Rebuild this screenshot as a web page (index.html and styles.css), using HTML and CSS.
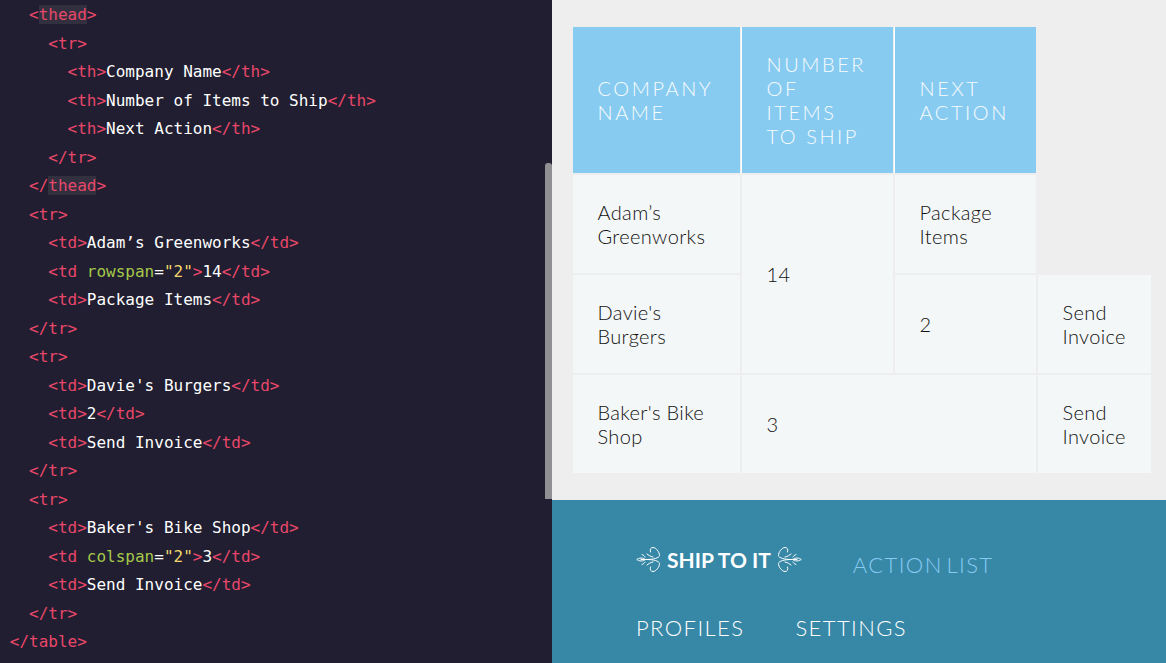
FILE: index.html
```html
<!DOCTYPE html>
<html lang="en">
<head>
<meta charset="utf-8">
<title>Table rowspan and colspan</title>
<link rel="stylesheet" href="styles.css">
</head>
<body>
<main class="layout">
<section class="editor">
<pre class="code">  <span class="t">&lt;<span class="hl">thead</span>&gt;</span>
    <span class="t">&lt;tr&gt;</span>
      <span class="t">&lt;th&gt;</span>Company Name<span class="t">&lt;/th&gt;</span>
      <span class="t">&lt;th&gt;</span>Number of Items to Ship<span class="t">&lt;/th&gt;</span>
      <span class="t">&lt;th&gt;</span>Next Action<span class="t">&lt;/th&gt;</span>
    <span class="t">&lt;/tr&gt;</span>
  <span class="t">&lt;/<span class="hl">thead</span>&gt;</span>
  <span class="t">&lt;tr&gt;</span>
    <span class="t">&lt;td&gt;</span>Adam’s Greenworks<span class="t">&lt;/td&gt;</span>
    <span class="t">&lt;td </span><span class="a">rowspan</span>=<span class="s">"2"</span><span class="t">&gt;</span>14<span class="t">&lt;/td&gt;</span>
    <span class="t">&lt;td&gt;</span>Package Items<span class="t">&lt;/td&gt;</span>
  <span class="t">&lt;/tr&gt;</span>
  <span class="t">&lt;tr&gt;</span>
    <span class="t">&lt;td&gt;</span>Davie's Burgers<span class="t">&lt;/td&gt;</span>
    <span class="t">&lt;td&gt;</span>2<span class="t">&lt;/td&gt;</span>
    <span class="t">&lt;td&gt;</span>Send Invoice<span class="t">&lt;/td&gt;</span>
  <span class="t">&lt;/tr&gt;</span>
  <span class="t">&lt;tr&gt;</span>
    <span class="t">&lt;td&gt;</span>Baker's Bike Shop<span class="t">&lt;/td&gt;</span>
    <span class="t">&lt;td </span><span class="a">colspan</span>=<span class="s">"2"</span><span class="t">&gt;</span>3<span class="t">&lt;/td&gt;</span>
    <span class="t">&lt;td&gt;</span>Send Invoice<span class="t">&lt;/td&gt;</span>
  <span class="t">&lt;/tr&gt;</span>
<span class="t">&lt;/table&gt;</span></pre>
<div class="thumb"></div>
</section>
<section class="preview">
<div class="stage">
<table class="ship">
<colgroup><col class="c1"><col class="c2"><col class="c3"><col class="c4"></colgroup>
<thead>
<tr><th>Company Name</th><th>Number of Items to Ship</th><th>Next Action</th></tr>
</thead>
<tbody>
<tr><td>Adam’s Greenworks</td><td rowspan="2">14</td><td>Package Items</td></tr>
<tr><td>Davie's Burgers</td><td>2</td><td>Send Invoice</td></tr>
<tr><td>Baker's Bike Shop</td><td colspan="2">3</td><td>Send Invoice</td></tr>
</tbody>
</table>
</div>
<nav class="nav">
<div class="nav-row">
<div class="brand">
<svg class="orn" viewBox="0 0 25 27" aria-hidden="true"><g fill="none" stroke="#fff" stroke-width="1" stroke-linecap="round"><path d="M1 13.500C3 11.500 7 11.500 9.500 13.500C7 15.500 3 15.500 1 13.500M5 13.500H13"/><path d="M14.500 6C13.500 3 15 1.500 17 1.500C20 1.500 23.500 6 23.500 9.500C23.500 12 17 13.500 11 13.500"/><path d="M14.500 21C13.500 24 15 25.500 17 25.500C20 25.500 23.500 21 23.500 17.500C23.500 15 17 13.500 11 13.500"/><path d="M11 8C12.500 9 14 10.500 17 11M11 19C12.500 18 14 16.500 17 16M6 8.500C7.500 9 8.500 10 9 11M6 18.500C7.500 18 8.500 17 9 16"/></g></svg>
<span class="brand-name">SHIP TO IT</span>
<svg class="orn flip" viewBox="0 0 25 27" aria-hidden="true"><g fill="none" stroke="#fff" stroke-width="1" stroke-linecap="round"><path d="M1 13.500C3 11.500 7 11.500 9.500 13.500C7 15.500 3 15.500 1 13.500M5 13.500H13"/><path d="M14.500 6C13.500 3 15 1.500 17 1.500C20 1.500 23.500 6 23.500 9.500C23.500 12 17 13.500 11 13.500"/><path d="M14.500 21C13.500 24 15 25.500 17 25.500C20 25.500 23.500 21 23.500 17.500C23.500 15 17 13.500 11 13.500"/><path d="M11 8C12.500 9 14 10.500 17 11M11 19C12.500 18 14 16.500 17 16M6 8.500C7.500 9 8.500 10 9 11M6 18.500C7.500 18 8.500 17 9 16"/></g></svg>
</div>
<a class="link active">ACTION LIST</a>
</div>
<div class="nav-row second">
<a class="link">PROFILES</a>
<a class="link">SETTINGS</a>
</div>
</nav>
</section>
</main>
</body>
</html>
```
FILE: styles.css
```css
html, body {
  margin: 0;
  height: 100%;
  overflow: hidden;
}
.layout {
  display: flex;
  height: 663px;
  width: 1166px;
}
.editor {
  position: relative;
  width: 552px;
  flex: none;
  background: #201e30;
  overflow: hidden;
}
.code {
  margin: 0;
  padding: 1px 0 0 9.75px;
  font-family: "DejaVu Sans Mono", monospace;
  font-size: 16px;
  line-height: 28.5px;
  color: #fff;
}
.t { color: #e8476a; }
.a { color: #a6c94a; }
.s { color: #f5d76e; }
.hl { background: #32303f; }
.thumb {
  position: absolute;
  left: 545px;
  top: 163px;
  width: 7px;
  height: 336px;
  background: #908f94;
  border-radius: 3px 3px 0 0;
}
.preview {
  flex: 1;
  display: flex;
  flex-direction: column;
  background: #eee;
}
.stage {
  height: 500px;
  box-sizing: border-box;
  padding: 26px 0 0 20px;
}
.ship {
  table-layout: fixed;
  width: 580px;
  border-collapse: separate;
  border-spacing: 1px;
  font-family: Lato, sans-serif;
}
.c1 { width: 167px; }
.c2 { width: 152px; }
.c3 { width: 142px; }
.c4 { width: 114px; }
.ship th {
  background: #88cbf1;
  color: #f8fcfe;
  font-weight: 300;
  font-size: 20px;
  line-height: 24px;
  letter-spacing: 2.55px;
  text-transform: uppercase;
  text-align: left;
  padding: 25px 25px 25px 24.5px;
}
.ship th + th {
  border-left: 1px solid #fff;
}
.ship td {
  background: #f4f7f8;
  color: #111;
  font-size: 20px;
  font-weight: 300;
  letter-spacing: 0.35px;
  line-height: 24px;
  padding: 25px 20px 25px 24.5px;
  border-top: 1px solid #eee;
}
.ship td + td {
  border-left: 1px solid #eee;
}
.nav {
  flex: 1;
  background: #3787a6;
  padding: 44px 0 0 84px;
  font-family: Lato, sans-serif;
}
.nav-row {
  display: flex;
  align-items: center;
  gap: 51px;
  height: 40px;
}
.nav-row.second {
  margin-top: 23px;
}
.brand {
  display: flex;
  align-items: center;
  gap: 6px;
  color: #fff;
  margin-top: -10px;
}
.brand-name {
  font-weight: 700;
  font-size: 21px;
}
.orn {
  width: 25px;
  height: 27px;
}
.flip {
  transform: scaleX(-1);
}
.link {
  font-size: 22px;
  font-weight: 300;
  letter-spacing: 1.4px;
  word-spacing: -3.5px;
  color: #fff;
}
.link.active {
  color: #87caf2;
}
```
